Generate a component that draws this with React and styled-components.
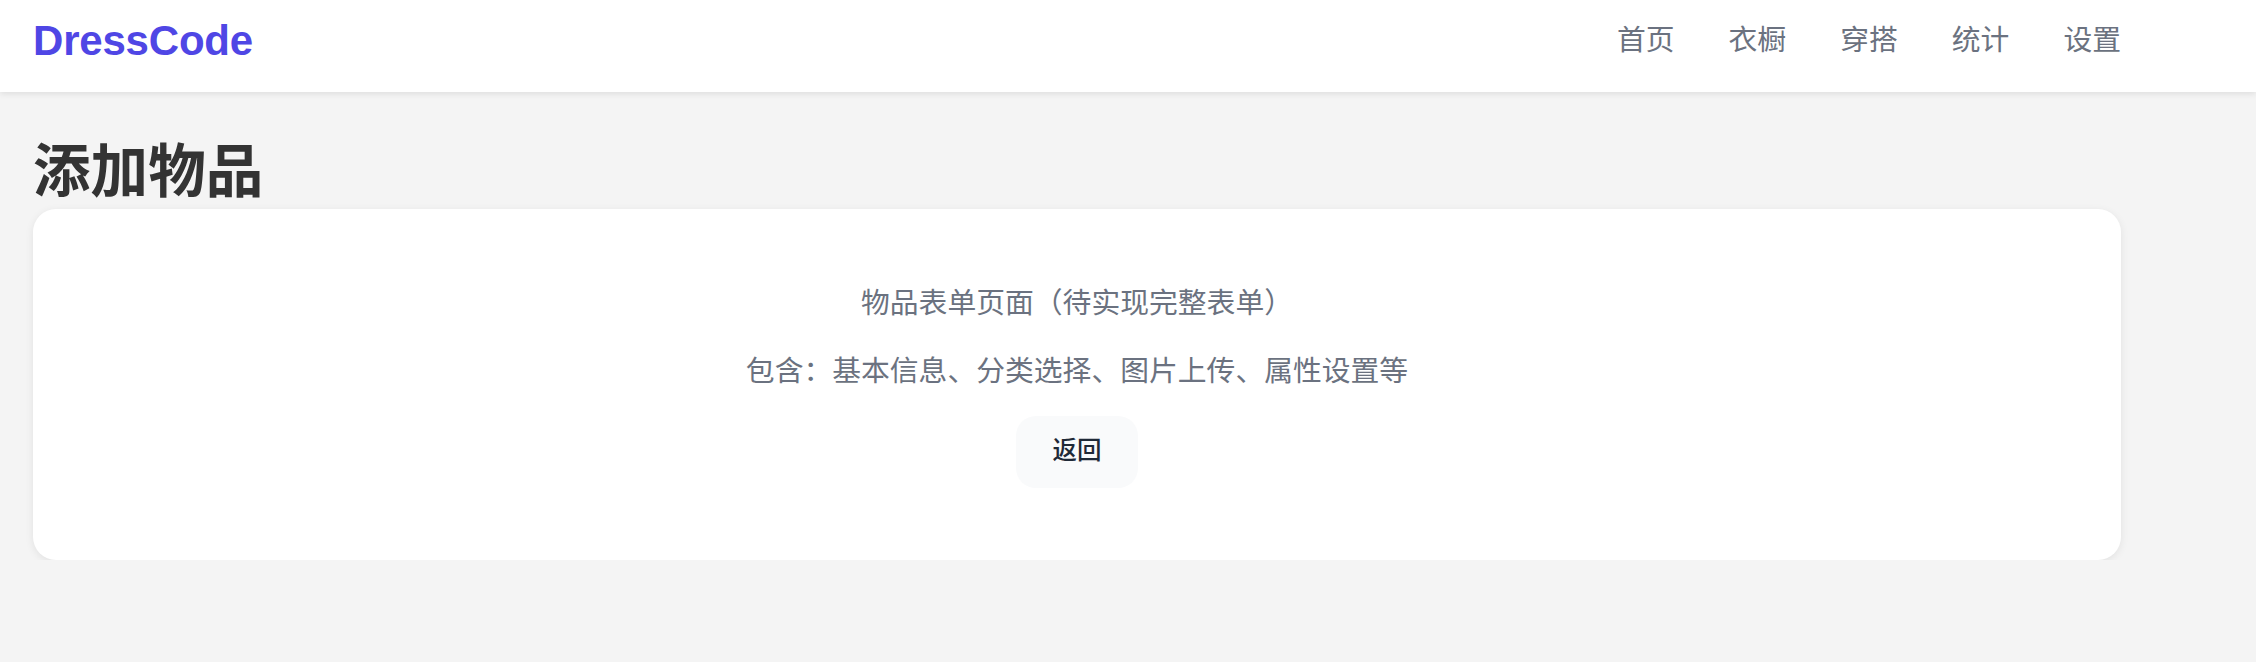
import React from 'react';
import styled, {createGlobalStyle} from 'styled-components';

const GlobalStyle = createGlobalStyle`
  html, body {
    margin: 0;
    padding: 0;
    background: #f4f4f4;
  }

  body {
    font-family: "Noto Sans CJK SC", "Noto Sans", sans-serif;
    color: #333;
  }
`;

const Header = styled.header`
  height: 92px;
  background: #fff;
  box-shadow: 0 2px 6px rgba(0, 0, 0, 0.09);
`;

const Shell = styled.div`
  max-width: 2088px;
  margin-left: 33px;
`;

const HeaderRow = styled(Shell)`
  height: 77px;
  display: flex;
  align-items: center;
  justify-content: space-between;
`;

const Logo = styled.div`
  font-family: "Liberation Sans", Arial, sans-serif;
  font-weight: 700;
  font-size: 42px;
  color: #4f46e5;
  letter-spacing: -0.2px;
  margin-top: 5px;
`;

const Nav = styled.nav`
  display: flex;
  gap: 54px;
`;

const NavLink = styled.a`
  font-size: 28.8px;
  line-height: 1;
  color: #6b7280;
  text-decoration: none;
  cursor: pointer;
`;

const Main = styled(Shell)`
  padding-top: 40px;
`;

const Title = styled.h1`
  margin: 0 0 7px;
  font-size: 57.6px;
  line-height: 70px;
  font-weight: 700;
  color: #333;
`;

const Card = styled.section`
  background: #fff;
  border-radius: 23px;
  box-shadow: 0 2px 8px rgba(0, 0, 0, 0.08);
  padding: 71px 0 72px;
  display: flex;
  flex-direction: column;
  align-items: center;
`;

const Note = styled.p`
  margin: 0 0 26px;
  font-size: 28.8px;
  line-height: 42px;
  color: #6b7280;
  text-align: center;
`;

const BackButton = styled.button`
  width: 122px;
  height: 72px;
  padding: 0 0 5px;
  border: none;
  border-radius: 20px;
  background: #f9fafb;
  font-family: "Noto Sans CJK SC", sans-serif;
  font-size: 24.5px;
  line-height: 1;
  font-weight: 500;
  color: #1f2937;
  cursor: pointer;
`;

const links = ['首页', '衣橱', '穿搭', '统计', '设置'];

export default function App() {
  return (
    <>
      <GlobalStyle/>
      <Header>
        <HeaderRow>
          <Logo>DressCode</Logo>
          <Nav>
            {links.map(l => <NavLink key={l}>{l}</NavLink>)}
          </Nav>
        </HeaderRow>
      </Header>
      <Main>
        <Title>添加物品</Title>
        <Card>
          <Note>物品表单页面（待实现完整表单）</Note>
          <Note>包含：基本信息、分类选择、图片上传、属性设置等</Note>
          <BackButton>返回</BackButton>
        </Card>
      </Main>
    </>
  );
}
